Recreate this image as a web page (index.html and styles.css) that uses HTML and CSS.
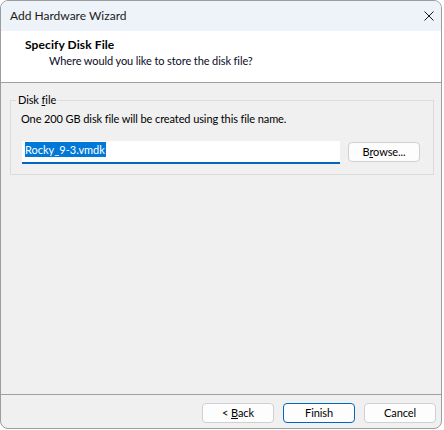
FILE: index.html
```html
<!DOCTYPE html>
<html>
<head>
<meta charset="utf-8">
<link rel="stylesheet" href="styles.css">
</head>
<body>
<div class="window">
  <div class="titlebar">
    <span class="title">Add Hardware Wizard</span>
    <svg class="close" width="10" height="10" viewBox="0 0 10 10"><path d="M0.5 0.5 L9.5 9.5 M9.5 0.5 L0.5 9.5" stroke="#1a1a1a" stroke-width="1" fill="none"/></svg>
  </div>
  <div class="header">
    <div class="h-title">Specify Disk File</div>
    <div class="h-sub">Where would you like to store the disk file?</div>
  </div>
  <div class="content">
    <fieldset class="group">
      <legend>Disk <u>f</u>ile</legend>
      <div class="desc">One 200 GB disk file will be created using this file name.</div>
      <div class="row">
        <div class="input"><span class="sel">Rocky_9-3.vmdk</span></div>
        <div class="btn"><span>B<u>r</u>owse...</span></div>
      </div>
    </fieldset>
  </div>
  <div class="footer">
    <div class="btn"><span>&lt; <u>B</u>ack</span></div>
    <div class="btn default"><span>Finish</span></div>
    <div class="btn"><span>Cancel</span></div>
  </div>
</div>
</body>
</html>
```

FILE: styles.css
```css
html, body {
  margin: 0;
  padding: 0;
  background: #ffffff;
}
body {
  font-family: Lato, "Noto Sans", sans-serif;
  font-size: 11px;
  letter-spacing: -0.1px;
  color: #000;
}
.window {
  width: 442px;
  height: 429px;
  box-sizing: border-box;
  border: 1px solid #9c9c9c;
  border-radius: 8px;
  overflow: hidden;
  display: flex;
  flex-direction: column;
  background: #f0f0f0;
}
.titlebar {
  height: 30px;
  flex: none;
  background: #eef3f9;
  display: flex;
  align-items: center;
  justify-content: space-between;
  padding: 0 7px 0 9px;
}
.title {
  font-size: 12px;
  letter-spacing: 0;
  line-height: 16px;
  color: #1a1a1a;
}
.close {
  display: block;
}
.header {
  flex: none;
  height: 52px;
  box-sizing: border-box;
  background: #ffffff;
  border-bottom: 1px solid #a0a0a0;
  padding: 6px 0 0 24px;
}
.h-title {
  font-weight: bold;
  font-size: 12px;
  letter-spacing: 0.1px;
  line-height: 16px;
}
.h-sub {
  line-height: 16px;
  margin-left: 24px;
  color: #0a0a28;
}
.content {
  flex: 1;
  padding: 10px 7px 0 9px;
}
.group {
  margin: 0;
  padding: 4px 10px 10px 10px;
  border: 1px solid #dcdcdc;
  min-width: 0;
}
.group legend {
  padding: 0 2px;
  margin-left: -5px;
  line-height: 14px;
}
.desc {
  line-height: 16px;
}
.row {
  display: flex;
  align-items: flex-start;
  gap: 8px;
  margin-top: 14px;
}
.input {
  width: 318px;
  height: 23px;
  box-sizing: border-box;
  margin-left: 1px;
  background: #ffffff;
  border-bottom: 2px solid #0067c0;
  padding: 1px 0 0 3px;
  line-height: 15px;
}
.sel {
  background: #0078d7;
  color: #ffffff;
  display: inline-block;
  letter-spacing: 0;
  padding-right: 1px;
}
.btn {
  width: 72px;
  height: 20px;
  box-sizing: border-box;
  border: 1px solid #d0d0d0;
  border-radius: 4px;
  background: #fdfdfd;
  display: flex;
  align-items: center;
  justify-content: center;
  line-height: 16px;
}
.row .btn {
  margin-top: 1px;
}
.btn.default {
  border-color: #0067c0;
}
.footer {
  flex: none;
  height: 34px;
  box-sizing: border-box;
  border-top: 1px solid #a0a0a0;
  display: flex;
  justify-content: flex-end;
  gap: 9px;
  padding: 8px 5px 0 0;
}
```
